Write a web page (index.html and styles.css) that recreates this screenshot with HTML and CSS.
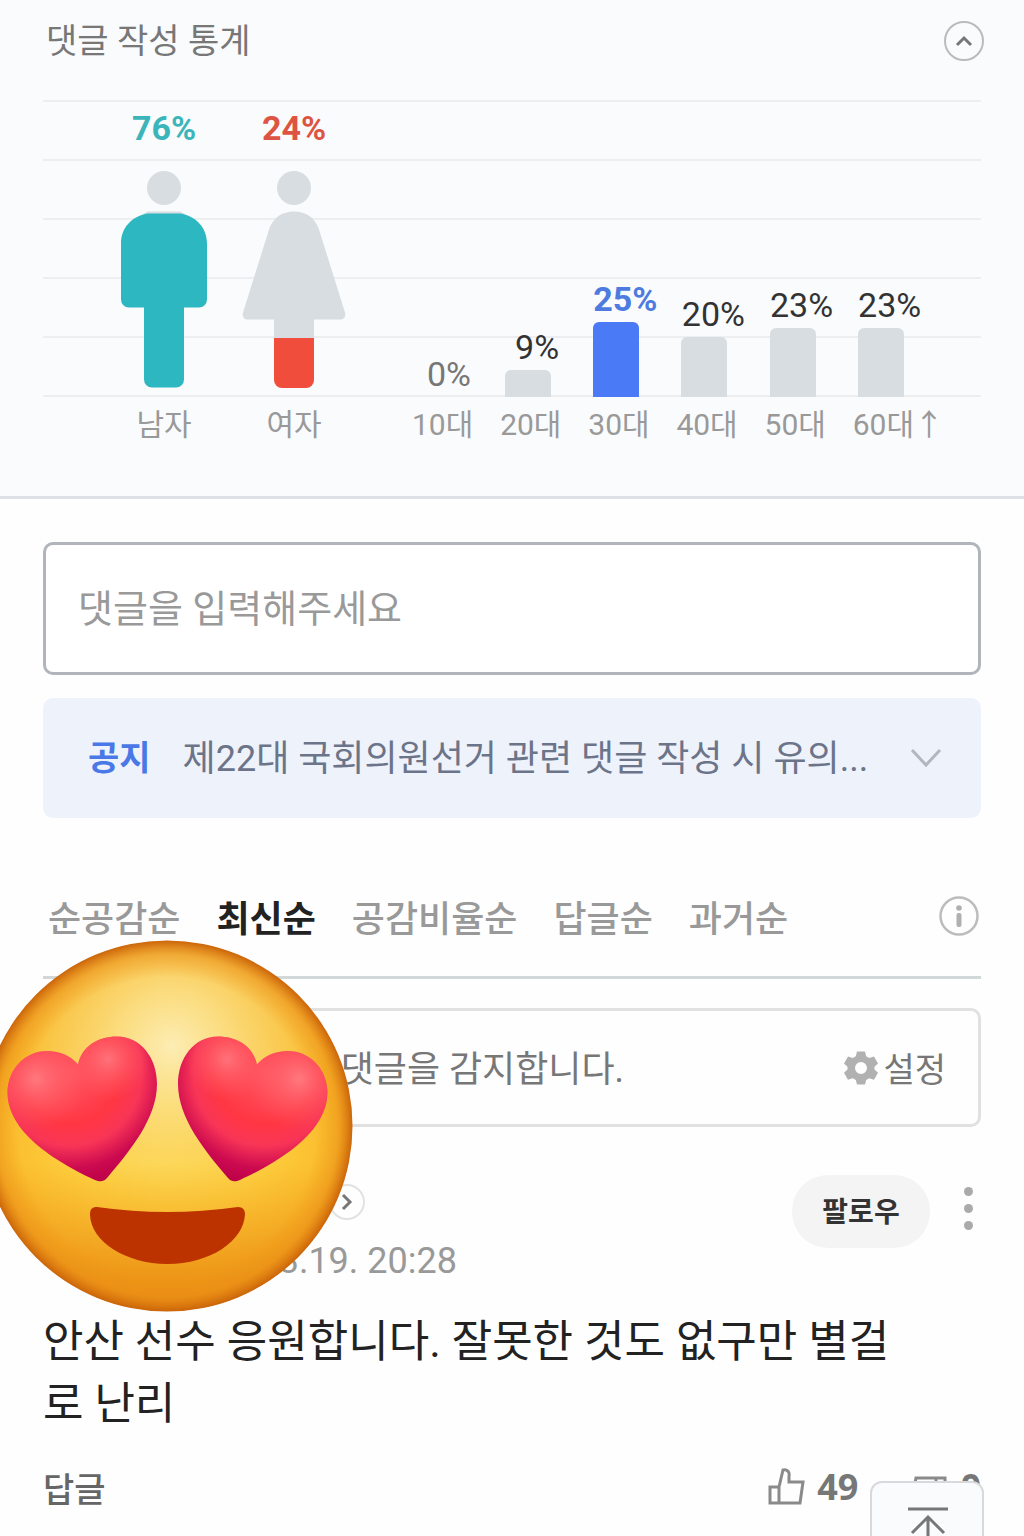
FILE: index.html
```html
<!DOCTYPE html>
<html lang="ko">
<head>
    <meta charset="UTF-8">
    <meta name="viewport" content="width=device-width, initial-scale=1.0">
    <title>댓글</title>
    <link rel="stylesheet" href="styles.css">
</head>
<body>
    <section class="stats">
        <div class="stats-head">
            <h2>댓글 작성 통계</h2>
            <button type="button" class="circle-btn" aria-label="통계 접기">
                <svg width="20" height="12" viewBox="0 0 20 12"><path d="M3 10l7-7 7 7"/></svg>
            </button>
        </div>

        <div class="chart">
            <div class="gender">
                <div class="person">
                    <strong class="male">76%</strong>
                    <svg width="104" height="217" viewBox="0 0 104 217">
                        <circle cx="52" cy="17" r="17" fill="#d8dde1"/>
                        <path d="M36 40.5h32l6 3H30z" fill="#d8dde1"/>
                        <path d="M35 42.500h34c15 3 26 14 26 30v56a8 8 0 0 1-8 8H72v72a8 8 0 0 1-8 8H40a8 8 0 0 1-8-8v-72H17a8 8 0 0 1-8-8v-56c0-16 11-27 26-30z" fill="#2db8c1"/>
                    </svg>
                    <span>남자</span>
                </div>
                <div class="person">
                    <strong class="female">24%</strong>
                    <svg width="104" height="217" viewBox="0 0 104 217">
                        <circle cx="52" cy="17" r="17" fill="#d8dde1"/>
                        <path d="M52 40.500c12 0 21 6 25 18l26 83c1 4-1 7-5 7H72v20H32v-20H6c-4 0-6-3-5-7l26-83c4-12 13-18 25-18z" fill="#d8dde1"/>
                        <path d="M32 167h40v42a8 8 0 0 1-8 8H40a8 8 0 0 1-8-8z" fill="#f04d3c"/>
                    </svg>
                    <span>여자</span>
                </div>
            </div>
            <div class="ages">
                <div class="age none"><em>0%</em><i style="height: 0px"></i><span>10대</span></div>
                <div class="age"><em>9%</em><i style="height: 27px"></i><span>20대</span></div>
                <div class="age top"><em>25%</em><i style="height: 75px"></i><span>30대</span></div>
                <div class="age"><em>20%</em><i style="height: 60px"></i><span>40대</span></div>
                <div class="age"><em>23%</em><i style="height: 69px"></i><span>50대</span></div>
                <div class="age"><em>23%</em><i style="height: 69px"></i><span>60대↑</span></div>
            </div>
        </div>
    </section>

    <main>
        <input type="text" class="write" placeholder="댓글을 입력해주세요" aria-label="댓글 입력">

        <a href="#" class="notice">
            <strong>공지</strong>
            <span>제22대 국회의원선거 관련 댓글 작성 시 유의...</span>
            <svg width="32" height="20" viewBox="0 0 32 20"><path d="M2 2l14 15L30 2"/></svg>
        </a>

        <nav class="sort">
            <button type="button">순공감순</button>
            <button type="button" class="on">최신순</button>
            <button type="button">공감비율순</button>
            <button type="button">답글순</button>
            <button type="button">과거순</button>
            <button type="button" class="info" aria-label="안내">
                <svg width="40" height="40" viewBox="0 0 40 40">
                    <circle cx="20" cy="20" r="18.500" fill="none" stroke="#bcbcbc" stroke-width="2.500"/>
                    <circle cx="20" cy="12" r="2.800" fill="#b0b0b0"/>
                    <rect x="17.500" y="17" width="5" height="14" rx="2" fill="#b0b0b0"/>
                </svg>
            </button>
        </nav>

        <div class="cleanbot">
            <p>클린봇이 악성댓글을 감지합니다.</p>
            <button type="button">
                <svg width="36" height="36" viewBox="0 0 36 36"><path fill-rule="evenodd" d="M14 1.500h8l1.200 4.800 3 1.700 4.800-1.500 4 7-3.500 3.300v2.600l3.500 3.300-4 7-4.800-1.500-3 1.700-1.200 4.600h-8l-1.200-4.600-3-1.700L5 29.700l-4-7 3.500-3.300v-2.600L1 13.500l4-7L9.800 8l3-1.700zM18 12a6 6 0 1 0 0 12 6 6 0 0 0 0-12z" fill="#b1b1b1"/></svg>
                설정
            </button>
        </div>

        <article class="comment">
            <header>
                <div class="writer">
                    <a href="#" class="more" aria-label="프로필 보기">
                        <svg width="12" height="20" viewBox="0 0 12 20"><path d="M2 3l7 7-7 7"/></svg>
                    </a>
                    <time>2024.03.19. 20:28</time>
                </div>
                <button type="button" class="follow">팔로우</button>
                <button type="button" class="menu" aria-label="더보기"><i></i><i></i><i></i></button>
            </header>
            <p>안산 선수 응원합니다. 잘못한 것도 없구만 별걸로 난리</p>
            <footer>
                <button type="button" class="reply">답글</button>
                <button type="button" class="vote">
                    <svg width="38" height="38" viewBox="0 0 38 38"><path d="M3 19h9v16H3zM12 19l4-17c4-1 7 2 6 6v6h14l-3 21H12"/></svg>
                    49
                </button>
                <button type="button" class="vote">
                    <svg width="38" height="38" viewBox="0 0 38 38"><path d="M35 26h-9V10h9zM26 26l-4 11c-4 1-7-2-6-6v-6H3l3-15h20"/></svg>
                    0
                </button>
            </footer>

            <svg class="sticker" width="376" height="376" viewBox="-20 8 376 376">
                <defs>
                    <radialGradient id="face" gradientUnits="userSpaceOnUse" cx="167" cy="215" r="220">
                        <stop offset="0" stop-color="#ffde50"/>
                        <stop offset=".4" stop-color="#fdd040"/>
                        <stop offset=".8" stop-color="#fab92a"/>
                        <stop offset="1" stop-color="#f6b032"/>
                    </radialGradient>
                    <radialGradient id="shine" gradientUnits="userSpaceOnUse" cx="172" cy="115" r="160">
                        <stop offset="0" stop-color="#fdedb5"/>
                        <stop offset=".35" stop-color="#fbe08a" stop-opacity=".85"/>
                        <stop offset=".65" stop-color="#f9d36c" stop-opacity=".6"/>
                        <stop offset="1" stop-color="#f9cf60" stop-opacity="0"/>
                    </radialGradient>
                    <linearGradient id="shade" x1="0" y1="0" x2="0" y2="1">
                        <stop offset=".6" stop-color="#ee8c0c" stop-opacity="0"/>
                        <stop offset="1" stop-color="#e57f0a" stop-opacity=".9"/>
                    </linearGradient>
                    <radialGradient id="rim" gradientUnits="userSpaceOnUse" cx="167" cy="195" r="186">
                        <stop offset=".8" stop-color="#ee9618" stop-opacity="0"/>
                        <stop offset=".92" stop-color="#ea9018" stop-opacity=".55"/>
                        <stop offset="1" stop-color="#c96208"/>
                    </radialGradient>
                    <radialGradient id="heart" gradientUnits="userSpaceOnUse" cx="70" cy="143" r="112">
                        <stop offset="0" stop-color="#ff5560"/>
                        <stop offset=".45" stop-color="#ff3643"/>
                        <stop offset=".64" stop-color="#f83556"/>
                        <stop offset=".84" stop-color="#cc0a50"/>
                        <stop offset="1" stop-color="#bb0048"/>
                    </radialGradient>
                    <radialGradient id="glow" gradientUnits="userSpaceOnUse" cx="36" cy="148" r="52">
                        <stop offset="0" stop-color="#ff787e"/>
                        <stop offset="1" stop-color="#ff5864" stop-opacity="0"/>
                    </radialGradient>
                    <radialGradient id="glow2" gradientUnits="userSpaceOnUse" cx="108" cy="128" r="42">
                        <stop offset="0" stop-color="#ff7279"/>
                        <stop offset="1" stop-color="#ff5864" stop-opacity="0"/>
                    </radialGradient>
                    <path id="shape" d="M78 133.500C82 115 98 105.500 117 105.500C141 105.500 157 127 157 153C157 187 130 220 107 247C103.500 251 100 251 95 249C63 234 7 204 7.500 161C8 138 25 120 47 120C60 120 71 125 78 133.500Z"/>
                    <g id="eye">
                        <use href="#shape" fill="url(#heart)"/>
                        <use href="#shape" fill="url(#glow)"/>
                        <use href="#shape" fill="url(#glow2)"/>
                    </g>
                </defs>
                <circle cx="167" cy="195" r="185" fill="url(#face)"/>
                <circle cx="167" cy="195" r="185" fill="url(#shine)"/>
                <circle cx="167" cy="195" r="185" fill="url(#shade)"/>
                <circle cx="167" cy="195" r="185.500" fill="url(#rim)"/>
                <use href="#eye"/>
                <use href="#eye" transform="translate(335 0) scale(-1 1)"/>
                <path d="M97 276Q167 286 238 276C243 276 245 279 245 283C244 310 210 333 167.500 333C125 333 91 310 90 284C90 278 92 276 97 276Z" fill="#bc3300"/>
            </svg>
        </article>
    </main>

    <a href="#" class="to-top" aria-label="맨 위로">
        <svg width="44" height="60" viewBox="0 0 44 60"><path d="M2 3h40M22 11v45M6 27l16-16 16 16"/></svg>
    </a>
</body>
</html>
```
FILE: styles.css
```css
* {
    box-sizing: border-box;
}
body {
    margin: 0;
    background-color: #fefefe;
    color: #222;
    font-family: Roboto, "Noto Sans CJK KR", sans-serif;
}
h2, p {
    margin: 0;
    font-weight: 400;
}
button {
    padding: 0;
    border: 0;
    background: none;
    color: inherit;
    font: inherit;
}
a {
    color: inherit;
    text-decoration: none;
}
svg {
    display: block;
    flex: none;
}

/* statistics */
.stats {
    padding: 0 43px 43px;
    background-color: #fafbfd;
    border-bottom: 3px solid #dfe0e6;
}
.stats-head {
    display: flex;
    align-items: center;
    justify-content: space-between;
    height: 100px;
    padding: 0 0 18px 3px;
}
.stats-head h2 {
    padding-bottom: 6px;
    color: #777;
    font-size: 34px;
}
.circle-btn {
    display: flex;
    align-items: center;
    justify-content: center;
    width: 40px;
    height: 40px;
    margin-right: -3px;
    border: 2px solid #bbb;
    border-radius: 50%;
}
.circle-btn path {
    fill: none;
    stroke: #777;
    stroke-width: 3;
}
.chart {
    display: flex;
    align-items: flex-end;
    padding-top: 8px;
    background: repeating-linear-gradient(#eceef0 0 2px, transparent 2px 59px) no-repeat;
    background-size: 100% 297px;
}
.gender {
    display: flex;
    padding-left: 56px;
}
.person {
    display: flex;
    flex-direction: column;
    align-items: center;
    width: 130px;
}
.person strong {
    font-size: 34px;
    line-height: 40px;
    margin-bottom: 23px;
}
.person span {
    margin-top: 9px;
}
.person span, .age span {
    color: #999;
    font-size: 30px;
    line-height: 56px;
    white-space: nowrap;
}
.male {
    color: #3bb5ba;
}
.female {
    color: #de5443;
}
.ages {
    display: grid;
    grid-template-columns: repeat(6, 1fr);
    align-items: end;
    flex: 1;
    padding: 0 37px 0 53px;
}
.age {
    display: flex;
    flex-direction: column;
}
.age em {
    width: 74px;
    color: #333;
    font-size: 34px;
    font-style: normal;
    line-height: 46px;
    text-align: center;
}
.age i {
    width: 46px;
    margin-left: 5px;
    border-radius: 6px 6px 0 0;
    background-color: #d8dde1;
}
.none em {
    color: #777;
}
.top em {
    color: #4e7be0;
    font-weight: 700;
}
.top i {
    background-color: #4a7af5;
}

main {
    padding: 43px 43px 0;
}
.write {
    display: block;
    width: 100%;
    height: 133px;
    padding: 0 32px;
    border: 3px solid #b2b4bc;
    border-radius: 10px;
    background-color: #fff;
    font-family: inherit;
    font-size: 38px;
}
.write::placeholder {
    color: #999;
}
.notice {
    display: flex;
    align-items: center;
    height: 120px;
    margin-top: 23px;
    padding: 0 39px 0 45px;
    border-radius: 10px;
    background-color: #eef2fb;
    color: #6c7489;
    font-size: 36px;
}
.notice strong {
    margin-right: 32px;
    padding-bottom: 6px;
    color: #4a78e6;
    font-size: 34px;
}
.notice span {
    flex: 1;
    padding-bottom: 6px;
    white-space: nowrap;
}
.notice path {
    fill: none;
    stroke: #b3b6be;
    stroke-width: 3;
}

/* sorting */
.sort {
    display: flex;
    align-items: center;
    gap: 36px;
    height: 119px;
    margin-top: 42px;
    padding: 0 0 4px 5px;
    border-bottom: 3px solid #d2d7d8;
    color: #999;
    font-size: 36px;
    font-weight: 500;
}
.sort .on {
    color: #222;
    font-weight: 700;
}
.sort .info {
    margin-left: auto;
    margin-right: 2px;
}

.cleanbot {
    display: flex;
    align-items: center;
    justify-content: space-between;
    height: 119px;
    margin-top: 29px;
    padding: 0 32px 0 87px;
    border: 3px solid #e1e1e1;
    border-radius: 10px;
    color: #777;
    font-size: 36px;
}
.cleanbot p {
    padding-bottom: 4px;
}
.cleanbot button {
    display: flex;
    align-items: center;
    gap: 4px;
    font-size: 34px;
}

/* comment */
.comment {
    position: relative;
    padding-top: 48px;
}
.comment header {
    display: flex;
    align-items: flex-start;
    height: 136px;
}
.writer {
    display: flex;
    flex-direction: column;
    flex: 1;
    gap: 20px;
    padding: 9px 0 0 125px;
    color: #999;
    font-size: 36px;
}
.more {
    display: flex;
    align-items: center;
    justify-content: center;
    width: 36px;
    height: 36px;
    margin-left: 161px;
    border: 2px solid #e2e2e2;
    border-radius: 50%;
}
.more path {
    fill: none;
    stroke: #777;
    stroke-width: 3;
}
.follow {
    width: 138px;
    height: 73px;
    padding-bottom: 4px;
    border-radius: 36px;
    background-color: #f4f4f4;
    color: #333;
    font-size: 28px;
    font-weight: 700;
}
.menu {
    display: flex;
    flex-direction: column;
    gap: 8px;
    margin: 12px 8px 0 34px;
}
.menu i {
    width: 9px;
    height: 9px;
    border-radius: 50%;
    background-color: #aaa;
}
.comment p {
    padding-right: 60px;
    font-size: 44px;
    line-height: 62px;
    word-break: break-all;
}
.comment footer {
    display: flex;
    align-items: center;
    gap: 52px;
    height: 50px;
    margin-top: 27px;
}
.reply {
    margin-right: auto;
    color: #666;
    font-size: 34px;
    font-weight: 500;
}
.vote {
    display: flex;
    align-items: center;
    gap: 12px;
    color: #777;
    font-family: "Noto Sans", sans-serif;
    font-size: 36px;
    font-weight: 700;
    line-height: 36px;
}
.vote path {
    fill: none;
    stroke: #8a8a8a;
    stroke-width: 3;
}
.sticker {
    position: absolute;
    top: -188px;
    left: -63px;
}

.to-top {
    position: fixed;
    right: 40px;
    bottom: -59px;
    width: 114px;
    height: 114px;
    padding: 23px 0 0 34px;
    border: 2px solid #d8d9dc;
    border-radius: 12px;
    background-color: #fafbfd;
}
.to-top path {
    fill: none;
    stroke: #777;
    stroke-width: 3;
}
```
